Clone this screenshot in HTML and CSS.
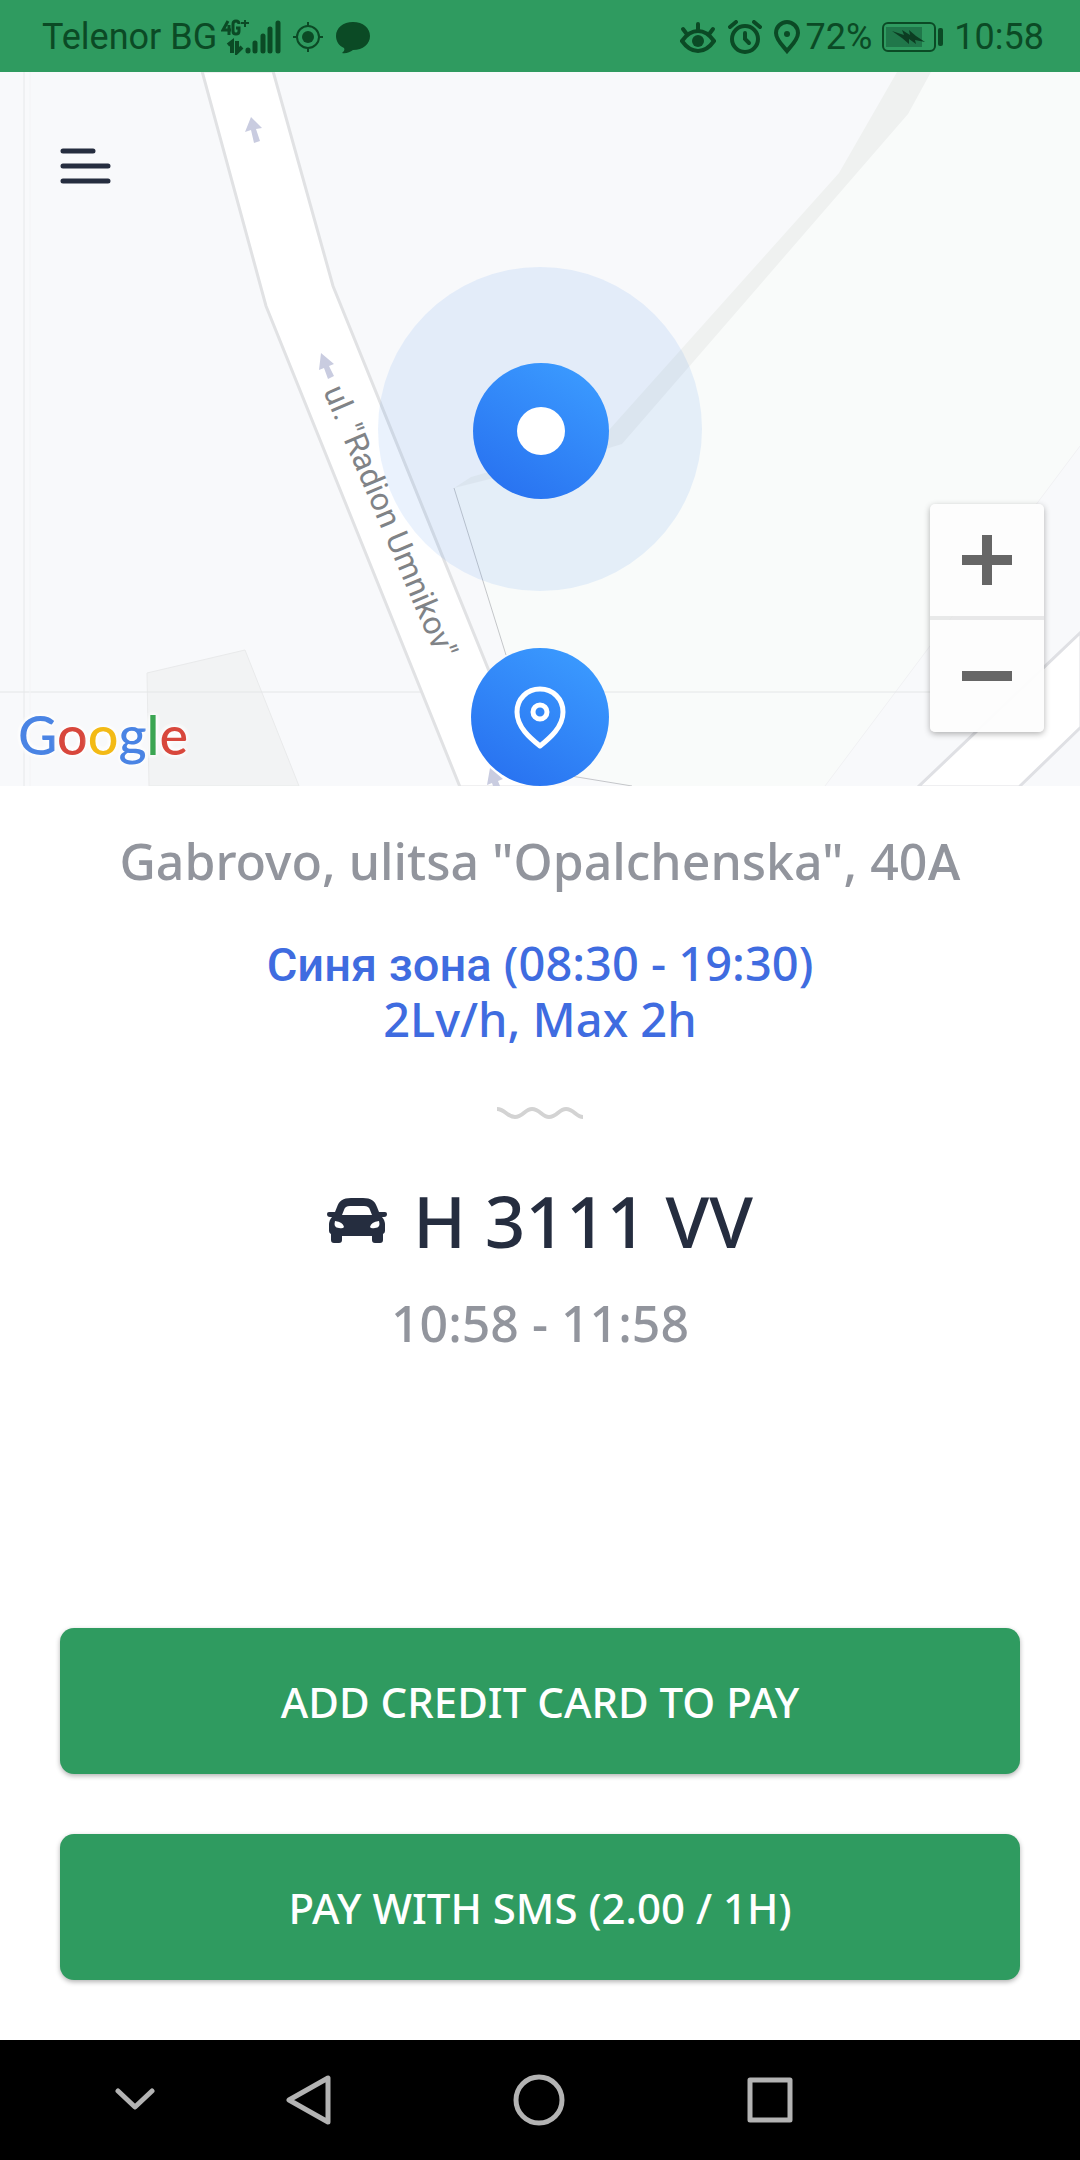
FILE: index.html
```html
<!DOCTYPE html>
<html lang="en">

<head>
  <meta charset="UTF-8">
  <meta name="viewport" content="width=device-width, initial-scale=1.0">
  <title>Parking</title>
  <link rel="stylesheet" href="styles.css">
</head>

<body>
  <header class="status-bar">
    <div class="status-left">
      <span>Telenor BG</span>
      <svg class="icon-signal" width="60" height="36" viewBox="0 0 60 36">
        <g fill="none" stroke="currentColor" stroke-width="3">
          <path d="M7 2 L2 11 H10 M8 6 V16" />
          <path d="M18 5 Q18 2 15 2 Q12 2 12 5 V12 Q12 15 15 15 Q18 15 18 12 V9 H15" />
          <path d="M24 1 V8 M20 4 H28" stroke-width="2" />
          <path d="M7 26 L11 23 V34 M16 22 V33 L21 28" stroke-width="4" />
        </g>
        <g stroke="currentColor" stroke-width="5" stroke-linecap="round">
          <path d="M27 31 V32 M34 24 V32 M42 17 V32 M49 10 V32 M57 4 V32" />
        </g>
      </svg>
      <svg class="icon-target" width="32" height="32" viewBox="0 0 32 32">
        <circle cx="16" cy="16" r="6" fill="currentColor" />
        <circle cx="16" cy="16" r="11" fill="none" stroke="currentColor" stroke-width="2" />
        <path d="M16 1 V5 M16 27 V31 M1 16 H5 M27 16 H31" stroke="currentColor" stroke-width="2" />
      </svg>
      <svg width="34" height="33" viewBox="0 0 34 33">
        <path d="M17 1 C27 1 34 7 34 15 C34 23 27 29 17 29 C14 31 10 33 6 32 C8 30 9 29 8 27 C3 25 0 20 0 15 C0 7 7 1 17 1 Z" fill="currentColor" />
      </svg>
    </div>
    <div class="status-right">
      <svg class="icon-eye" width="36" height="33" viewBox="0 0 36 33">
        <g fill="none" stroke="currentColor" stroke-width="4" stroke-linecap="round">
          <path d="M2 20 Q9 10 18 10 Q27 10 34 20 Q27 30 18 30 Q9 30 2 20 Z" />
          <path d="M18 3 V9 M3 8 L6 12 M33 8 L30 12" />
        </g>
        <circle cx="18" cy="20" r="6" fill="currentColor" />
      </svg>
      <svg class="icon-alarm" width="34" height="34" viewBox="0 0 34 34">
        <g fill="none" stroke="currentColor" stroke-width="4" stroke-linecap="round">
          <circle cx="17" cy="19" r="13" />
          <path d="M17 13 V19 L21 23" />
          <path d="M2 7 L8 2 M32 7 L26 2" />
        </g>
      </svg>
      <svg class="icon-pin" width="26" height="34" viewBox="0 0 26 34">
        <path d="M13 2 C19 2 24 7 24 13 C24 20 17 26 13 31 C9 26 2 20 2 13 C2 7 7 2 13 2 Z" fill="none" stroke="currentColor" stroke-width="4" />
        <circle cx="13" cy="14" r="3" fill="currentColor" />
      </svg>
      <span class="battery-level">72%</span>
      <svg class="icon-battery" width="62" height="30" viewBox="0 0 62 30">
        <rect x="1" y="1" width="52" height="28" rx="5" fill="none" stroke="currentColor" stroke-width="2" />
        <rect x="4" y="5" width="36" height="20" fill="#20774a" />
        <path d="M10 9 L22 13 L20 8 L28 13 L27 8 L34 14 L43 20 L33 18 L34 22 L27 17 L27 22 L20 16 Z" fill="#0c3d22" />
        <rect x="56" y="6" width="5" height="18" rx="2" fill="currentColor" />
      </svg>
      <span>10:58</span>
    </div>
  </header>

  <section class="map">
    <svg class="map-tiles" viewBox="0 0 1080 714" preserveAspectRatio="xMidYMid slice">
      <defs>
        <linearGradient id="pin-fill" x1="0.2" y1="1" x2="0.8" y2="0">
          <stop offset="0" stop-color="#2871f0" />
          <stop offset="1" stop-color="#3b9bff" />
        </linearGradient>
      </defs>
      <rect width="1080" height="714" fill="#f8f9fb" />

      <!-- park area and footpath -->
      <path d="M931 0 H1080 V374 L825 714 H632 L540 696 L454 416 L609 376 L908 42 Z" fill="#f9fbfa" />
      <path d="M897 0 H931 L908 42 L622 372 L609 376 L490 407 L454 416 L471 405 L540 385 L600 368 L839 101 Z" fill="#eff1f0" />
      <path d="M454 416 L506 583 M571 704 L632 714" stroke="#c4c6c9" fill="none" />
      <path d="M1080 374 L825 714" stroke="#f0f1f3" fill="none" />

      <!-- building -->
      <path d="M147 601 L245 578 L299 714 H149 Z" fill="#f2f3f4" stroke="#e9eaeb" />

      <path d="M0 620 H1080" stroke="#e4e6e7" />
      <path d="M24 0 V714" stroke="#e6e8ea" />
      <path d="M30 0 V714" stroke="#f3f4f6" />

      <!-- streets -->
      <path d="M202 -1 L266 234 L460 715 H536 L333 214 L273 -1 Z" fill="#fff" stroke="#e1e2e4" stroke-width="3" />
      <path d="M1081 560 L918 715 H1019 L1081 655 Z" fill="#fff" stroke="#dfe0e4" stroke-width="3" />
      <g fill="#c9cce0">
        <path d="M251 45 L262 56 L256 57 L260 69 L254 71 L251 58 L245 60 Z" />
        <path d="M321 281 L334 292 L329 294 L334 304 L328 307 L324 296 L319 298 Z" />
        <path d="M490 696 L503 707 L498 709 L500 714 H493 L492 711 L487 713 Z" />
      </g>
      <text class="street-name" transform="translate(323 319) rotate(67)">ul. "Radion Umnikov"</text>

      <!-- current position -->
      <circle cx="540" cy="357" r="162" fill="#3080f0" fill-opacity="0.1" />
      <circle cx="541" cy="359" r="68" fill="url(#pin-fill)" />
      <circle cx="541" cy="359" r="24" fill="#fff" />

      <!-- parking spot -->
      <circle cx="540" cy="645" r="69" fill="url(#pin-fill)" />
      <g fill="none" stroke="#fff" stroke-width="5" stroke-linejoin="round">
        <path d="M540 617 C527 617 517 627 517 640 C517 655 530 666 540 674 C550 666 563 655 563 640 C563 627 553 617 540 617 Z" />
        <circle cx="540" cy="640" r="7" />
      </g>
    </svg>

    <button class="menu-button" type="button" aria-label="Menu">
      <svg width="52" height="38" viewBox="0 0 52 38">
        <path d="M3 4 H33 M3 19 H48 M3 34 H48" stroke="#252d3f" stroke-width="5" stroke-linecap="round" />
      </svg>
    </button>

    <div class="zoom-control">
      <button type="button" aria-label="Zoom in">
        <svg width="50" height="50" viewBox="0 0 50 50">
          <path d="M20 0 H30 V20 H50 V30 H30 V50 H20 V30 H0 V20 H20 Z" fill="#666" />
        </svg>
      </button>
      <button type="button" aria-label="Zoom out">
        <svg width="50" height="50" viewBox="0 0 50 50">
          <path d="M0 20 H50 V30 H0 Z" fill="#666" />
        </svg>
      </button>
    </div>

    <div class="google"><span class="blue">G</span><span class="red">o</span><span class="yellow">o</span><span class="blue">g</span><span class="green">l</span><span class="red">e</span></div>
  </section>

  <main class="details">
    <p class="address">Gabrovo, ulitsa "Opalchenska", 40<span class="cyrillic">А</span></p>
    <p class="zone"><span class="cyrillic">Синя зона</span> (08:30 - 19:30)<br>2Lv/h, Max 2h</p>

    <svg class="wave" width="86" height="12" viewBox="0 0 86 12">
      <path d="M0 2 C8 2 10 10 18 10 C26 10 28 2 35 2 C43 2 45 10 52 10 C60 10 62 2 69 2 C77 2 79 10 86 10" fill="none" stroke="#d3d3d3" stroke-width="4" />
    </svg>

    <div class="plate">
      <svg width="60" height="46" viewBox="0 0 60 46">
        <path fill="#252d3f" fill-rule="evenodd" d="M24 0 H36 C44 0 48 3 50 9 L52 14 H58 Q60 14 60 16 Q60 19 57 19 H55 Q58 22 58 27 V33 Q58 35 56 36 V42 Q56 45 53 45 H48 Q45 45 45 42 V38 H15 V42 Q15 45 12 45 H7 Q4 45 4 42 V36 Q2 35 2 33 V27 Q2 22 5 19 H3 Q0 19 0 16 Q0 14 2 14 H8 L10 9 C12 3 16 0 24 0 Z M23 8 Q18 8 17 12 L15 17 H45 L43 12 Q42 8 37 8 Z M8 23 Q6 30 12 30 Q16 31 17 29 Q16 24 8 23 Z M52 23 Q44 24 43 29 Q44 31 48 30 Q54 30 52 23 Z" />
      </svg>
      <span>H 3111 VV</span>
    </div>
    <p class="time">10:58 - 11:58</p>

    <div class="actions">
      <button class="pay-button" type="button">ADD CREDIT CARD TO PAY</button>
      <button class="pay-button" type="button">PAY WITH SMS (2.00 / 1H)</button>
    </div>
  </main>

  <nav class="nav-bar">
    <button type="button" aria-label="Hide bar">
      <svg width="40" height="24" viewBox="0 0 40 24">
        <path d="M3 3 L20 19 L37 3" />
      </svg>
    </button>
    <button type="button" aria-label="Back">
      <svg width="46" height="52" viewBox="0 0 46 52">
        <path d="M42 4 V48 L3 26 Z" />
      </svg>
    </button>
    <button type="button" aria-label="Home">
      <svg width="52" height="52" viewBox="0 0 52 52">
        <circle cx="26" cy="26" r="23" />
      </svg>
    </button>
    <button type="button" aria-label="Recent apps">
      <svg width="46" height="46" viewBox="0 0 46 46">
        <rect x="3" y="3" width="40" height="40" />
      </svg>
    </button>
  </nav>
</body>

</html>
```

FILE: styles.css
```css
body {
  margin: 0;
  min-height: 100vh;
  display: flex;
  flex-direction: column;
  background-color: #fff;
  font-family: "Noto Sans", sans-serif;
  font-weight: 500;
}

p {
  margin: 0;
}

svg {
  display: block;
  flex-shrink: 0;
}

button {
  padding: 0;
  border: none;
  background: none;
  font-family: inherit;
  font-weight: inherit;
  cursor: pointer;
}

/* Status bar */
.status-bar {
  display: flex;
  justify-content: space-between;
  align-items: center;
  height: 72px;
  padding: 2px 36px 0 42px;
  box-sizing: border-box;
  background-color: #2f9b60;
  color: #0b4a25;
  font-family: Roboto, sans-serif;
  font-size: 36px;
  font-weight: 400;
}

.status-left,
.status-right {
  display: flex;
  align-items: center;
}

.status-left {
  gap: 12px;
}

.icon-signal {
  margin: 0 -1px 0 -8px;
}

.status-right {
  gap: 12px;
}

.battery-level {
  margin: 0 -2px 0 -6px;
}

.icon-battery {
  margin-right: -2px;
}

/* Map */
.map {
  position: relative;
  height: 714px;
  overflow: hidden;
}

.map-tiles {
  width: 100%;
  height: 100%;
}

.street-name {
  font-family: Roboto, sans-serif;
  font-size: 32px;
  font-weight: 400;
  fill: #808387;
}

.menu-button {
  position: absolute;
  top: 75px;
  left: 60px;
}

.zoom-control {
  position: absolute;
  top: 432px;
  right: 36px;
  width: 114px;
  display: flex;
  flex-direction: column;
  gap: 4px;
  border-radius: 5px;
  background-color: rgba(225, 225, 225, 0.7);
  box-shadow: 0 2px 6px rgba(0, 0, 0, 0.3);
  overflow: hidden;
}

.zoom-control button {
  display: flex;
  justify-content: center;
  align-items: center;
  height: 112px;
  background-color: rgba(255, 255, 255, 0.9);
}

.google {
  position: absolute;
  left: 18px;
  bottom: 18px;
  font-family: Lato, sans-serif;
  font-size: 54px;
  line-height: 66px;
  text-shadow: 0 0 6px #fff, 0 0 6px #fff, 0 0 6px #fff;
}

.blue {
  color: #4a84e4;
}

.red {
  color: #d8473c;
}

.yellow {
  color: #f3ba15;
}

.green {
  color: #3ba552;
}

/* Parking details */
.details {
  flex: 1;
  display: flex;
  flex-direction: column;
  align-items: center;
  padding: 43px 60px 60px;
  text-align: center;
}

.address,
.time {
  font-size: 50px;
  line-height: 64px;
  color: #92959d;
}

.zone {
  margin-top: 42px;
  font-size: 47px;
  line-height: 56px;
  color: #3f6ce0;
}

.cyrillic {
  font-family: Roboto, sans-serif;
  font-weight: 500;
  line-height: 1;
}

.wave {
  margin: 60px 0;
}

.plate {
  display: flex;
  align-items: center;
  gap: 26px;
  font-size: 71px;
  line-height: 84px;
  color: #252d3f;
}

.time {
  margin-top: 28px;
}

.actions {
  align-self: stretch;
  display: flex;
  flex-direction: column;
  gap: 60px;
  margin-top: auto;
}

.pay-button {
  height: 146px;
  border-radius: 14px;
  background-color: #2f9b60;
  box-shadow: 0 2px 5px rgba(0, 0, 0, 0.3);
  color: #fff;
  font-size: 42px;
}

/* Navigation bar */
.nav-bar {
  display: grid;
  grid-template-columns: 1fr 2fr 2fr 2fr;
  height: 120px;
  padding: 0 18% 0 7.2%;
  background-color: #000;
}

.nav-bar button {
  display: flex;
  justify-content: center;
  align-items: center;
}

.nav-bar svg {
  fill: none;
  stroke: #b3b3b3;
  stroke-width: 5px;
  stroke-linecap: round;
  stroke-linejoin: round;
}
```
